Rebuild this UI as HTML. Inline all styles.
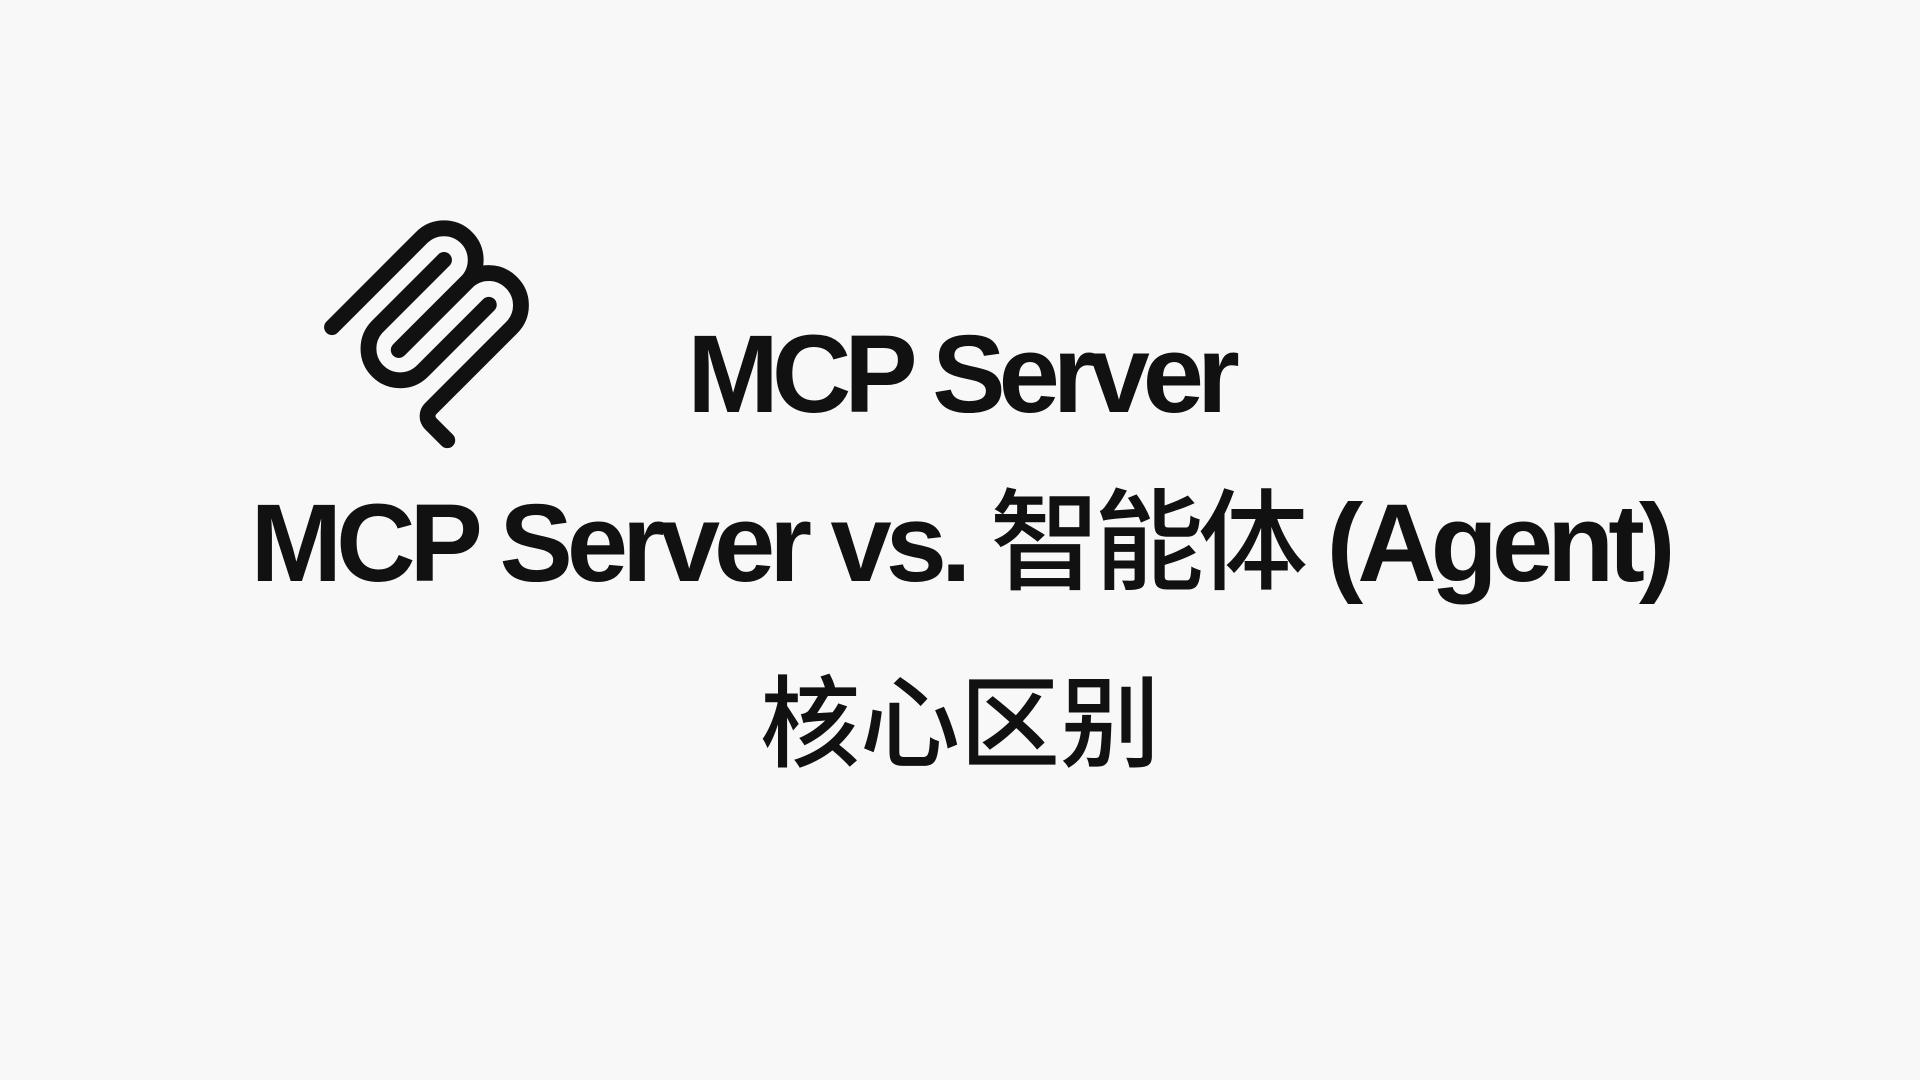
<!DOCTYPE html>
<html><head><meta charset="utf-8">
<style>
html,body{margin:0;padding:0;}
body{width:1920px;height:1080px;background:#f8f8f8;position:relative;overflow:hidden;
font-family:"Liberation Sans","Noto Sans CJK SC",sans-serif;color:#111;}
.t{position:absolute;left:0;width:1920px;text-align:center;font-weight:bold;white-space:nowrap;}
#l1{top:320px;font-size:110px;line-height:110px;letter-spacing:-7px;}
#l2{top:478px;font-size:110px;line-height:110px;letter-spacing:-6px;}
#l3{top:666px;font-size:100px;line-height:100px;font-family:"Noto Sans CJK SC",sans-serif;font-weight:500;}
.cjk{font-family:"Noto Sans CJK SC",sans-serif;font-weight:500;}
svg{position:absolute;left:0;top:0;}
</style></head><body>
<svg width="1920" height="1080">
<g transform="translate(299,198) scale(1.32)" fill="none" stroke="#111" stroke-width="12" stroke-linecap="round">
<path d="M25 97.8528L92.8823 29.9706C102.255 20.598 117.451 20.598 126.823 29.9706C136.196 39.3431 136.196 54.5391 126.823 63.9117L75.5581 115.177"/>
<path d="M76.2653 114.47L126.823 63.9117C136.196 54.5391 151.392 54.5391 160.765 63.9117L161.118 64.2652C170.491 73.6378 170.491 88.8338 161.118 98.2063L99.7248 159.6C96.6006 162.724 96.6006 167.789 99.7248 170.913L112.331 183.52"/>
<path d="M109.853 46.9411L59.6482 97.1457C50.2757 106.518 50.2757 121.714 59.6482 131.087C69.0208 140.459 84.2168 140.459 93.5894 131.087L143.794 80.8822"/>
</g>
</svg>
<div class="t" id="l1">MCP Server</div>
<div class="t" id="l2">MCP Server vs. <span class="cjk">智能体</span> (Agent)</div>
<div class="t" id="l3">核心区别</div>
</body></html>
